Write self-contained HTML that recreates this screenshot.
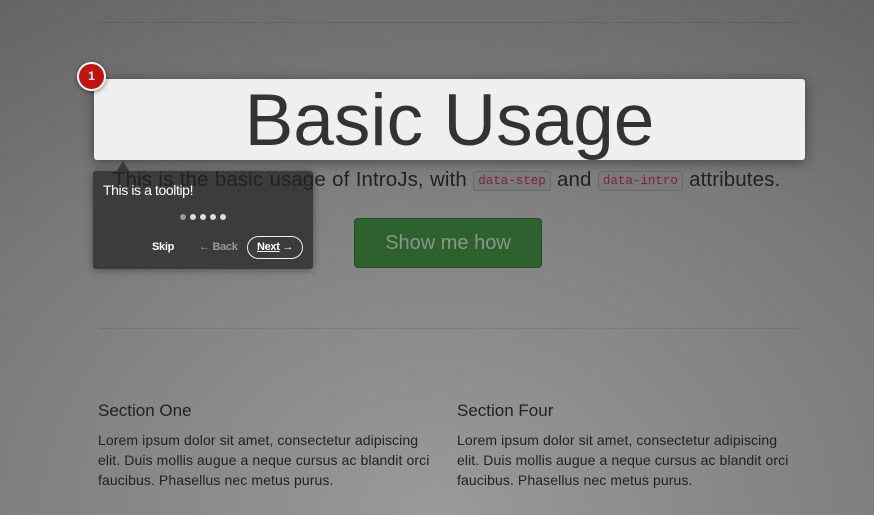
<!DOCTYPE html>
<html><head><meta charset="utf-8"><style>
*{margin:0;padding:0;box-sizing:border-box}
html,body{width:874px;height:515px;overflow:hidden}
body{position:relative;font-family:"Liberation Sans",sans-serif;
background:radial-gradient(ellipse 900px 700px at 50% 100%,#9a9a9a 0%,#7b7b7b 55%,#5c5c5c 100%);}
.hr{position:absolute;left:98px;width:700px;height:1px;background:rgba(0,0,0,0.09)}
.hl{position:absolute;left:94px;top:79px;width:711px;height:81px;background:#efefef;border-radius:3px;box-shadow:0 2px 12px rgba(0,0,0,.45)}
h1{position:absolute;left:94px;top:80px;width:711px;text-align:center;font-weight:normal;font-size:73px;line-height:81px;color:#333;letter-spacing:0}
.lead{position:absolute;left:113px;top:168px;font-size:20.5px;color:#222;white-space:nowrap;letter-spacing:0.1px;word-spacing:0.5px}
code{font-family:"Liberation Mono",monospace;font-size:12.5px;color:#8a1e34;background:#7a7a7a;border:1px solid #6a6a6a;border-radius:3px;padding:2px 4px;position:relative;top:-2px;letter-spacing:0}
.btn{position:absolute;left:354px;top:218px;width:188px;height:50px;background:#2d612d;border:1px solid #234f23;border-radius:4px;color:#8a958a;font-size:20px;text-align:center;line-height:48px}
.tip{position:absolute;left:93px;top:171px;width:220px;height:98px;background:#3c3c3c;border-radius:3px;box-shadow:0 1px 8px rgba(0,0,0,.4)}
.arrow{position:absolute;left:117px;top:160px;width:0;height:0;border:6px solid transparent;border-bottom:11px solid #3c3c3c;border-top:0}
.tiptext{position:absolute;left:103px;top:182px;color:#fff;font-size:14px;letter-spacing:-0.4px}
.dots{position:absolute;left:180px;top:214px}
.dots i{display:inline-block;width:6px;height:6px;border-radius:50%;background:#ddd;margin-right:4px;float:left}
.dots i:first-child{background:#999}
.tb{position:absolute;font-size:11px;font-weight:bold;color:#fff;letter-spacing:-0.3px}
.next{position:absolute;left:247px;top:236px;width:56px;height:23px;border:1px solid #eee;border-radius:12px;color:#fff;font-size:11px;font-weight:bold;text-align:center;line-height:21px;letter-spacing:-0.3px}
.badge{position:absolute;left:77px;top:62px;width:29px;height:29px;border-radius:50%;background:#c4120f;border:2.5px solid #fff;box-shadow:0 1px 4px rgba(0,0,0,.5);color:#fff;font-weight:bold;font-size:12px;text-align:center;line-height:24px}
h3{position:absolute;font-weight:normal;font-size:17px;color:#222}
p.s{position:absolute;width:338px;font-size:14px;line-height:20px;color:#222;letter-spacing:0.1px}
</style></head><body>
<div class="hr" style="top:22px"></div>
<div class="hr" style="top:328px"></div>
<div class="hl"></div>
<h1>Basic Usage</h1>
<div class="btn">Show me how</div>
<div class="arrow"></div>
<div class="tip"></div>
<div class="lead">This is the basic usage of IntroJs, with <code>data-step</code> and <code>data-intro</code> attributes.</div>
<div class="tiptext">This is a tooltip!</div>
<div class="dots"><i></i><i></i><i></i><i></i><i></i></div>
<div class="tb" style="left:152px;top:241px">Skip</div>
<div class="tb" style="left:199px;top:241px;color:#999">← Back</div>
<div class="next"><u>Next</u> →</div>
<div class="badge">1</div>
<h3 style="left:98px;top:401px">Section One</h3>
<p class="s" style="left:98px;top:430px">Lorem ipsum dolor sit amet, consectetur adipiscing elit. Duis mollis augue a neque cursus ac blandit orci faucibus. Phasellus nec metus purus.</p>
<h3 style="left:457px;top:401px">Section Four</h3>
<p class="s" style="left:457px;top:430px">Lorem ipsum dolor sit amet, consectetur adipiscing elit. Duis mollis augue a neque cursus ac blandit orci faucibus. Phasellus nec metus purus.</p>
</body></html>
